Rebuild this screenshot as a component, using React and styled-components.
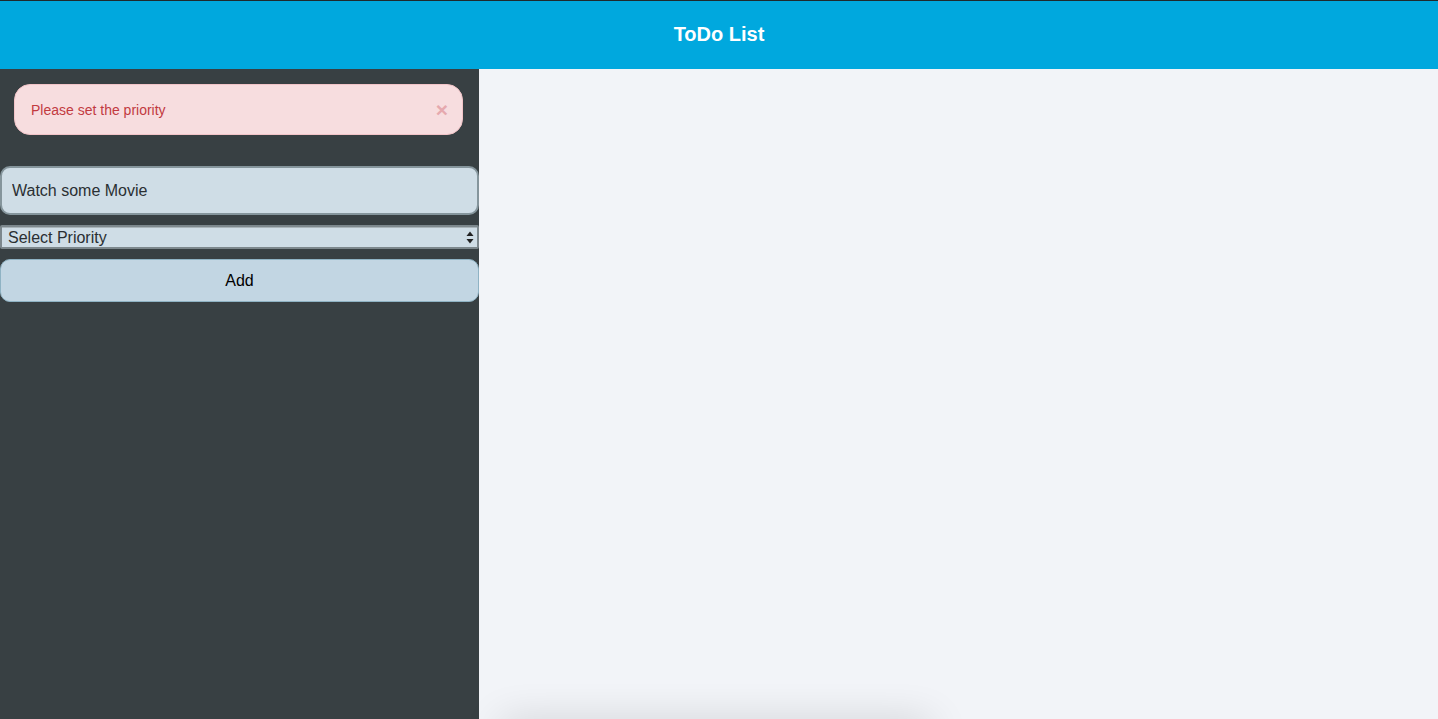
import React, { useState } from 'react'
import styled, { createGlobalStyle } from 'styled-components';

const GlobalStyle = createGlobalStyle`
    *{
        box-sizing: border-box;
    }
    body{
        margin: 0;
        overflow: hidden;
        font-family: "Liberation Sans", Arial, sans-serif;
        background: #f2f4f8;
    }
`;

function App() {
    const [task, setTask] = useState('Watch some Movie');
    const [alertOpen, setAlertOpen] = useState(true);

    return (
        <>
            <GlobalStyle />
            <Header>
                <h1>ToDo List</h1>
            </Header>
            <Body>
                <Sidebar>
                    {alertOpen && (
                        <Alert>
                            <span>Please set the priority</span>
                            <CloseButton onClick={() => setAlertOpen(false)}>&times;</CloseButton>
                        </Alert>
                    )}
                    <Form onSubmit={(e) => e.preventDefault()}>
                        <TaskInput value={task} onChange={(e) => setTask(e.target.value)} />
                        <SelectWrap>
                            <PrioritySelect defaultValue="">
                                <option value="">Select Priority</option>
                                <option value="high">High</option>
                                <option value="medium">Medium</option>
                                <option value="low">Low</option>
                            </PrioritySelect>
                            <SelectArrows width="8" height="13" viewBox="0 0 8 13">
                                <path d="M4 0.5 L7.5 5 L0.5 5 Z" fill="#222" />
                                <path d="M4 12.5 L7.5 8 L0.5 8 Z" fill="#222" />
                            </SelectArrows>
                        </SelectWrap>
                        <AddButton type="submit">Add</AddButton>
                    </Form>
                </Sidebar>
                <Main>
                    <ListCard />
                </Main>
            </Body>
        </>
    )
}

const Header = styled.header`
    height: 69px;
    background: #00a8de;
    border-top: 1px solid #1f2a2e;
    display: flex;
    align-items: center;
    justify-content: center;
    padding-bottom: 2px;
    h1{
        margin: 0;
        color: #fff;
        font-size: 20px;
        font-weight: bold;
    }
`;

const Body = styled.div`
    display: flex;
    height: calc(100vh - 69px);
`;

const Sidebar = styled.aside`
    width: 479px;
    flex-shrink: 0;
    background: #384043;
    padding-top: 15px;
`;

const Alert = styled.div`
    margin: 0 16px 0 14px;
    height: 51px;
    display: flex;
    align-items: center;
    justify-content: space-between;
    padding: 0 14px 0 16px;
    background: #f7dddf;
    border: 1px solid #f2c4c8;
    border-radius: 16px;
    color: #c23a3f;
    font-size: 14px;
`;

const CloseButton = styled.button`
    border: none;
    background: none;
    padding: 0;
    color: #e6a9ae;
    font-size: 21px;
    font-weight: bold;
    line-height: 1;
    cursor: pointer;
    font-family: "Liberation Sans", Arial, sans-serif;
`;

const Form = styled.form`
    display: flex;
    flex-direction: column;
    margin-top: 31px;
`;

const TaskInput = styled.input`
    width: 479px;
    height: 49px;
    padding: 0 10px;
    background: #cfdde6;
    border: 2px solid #85959c;
    border-radius: 10px;
    font-family: "Liberation Sans", Arial, sans-serif;
    font-size: 16px;
    color: #2a2f32;
    outline: none;
`;

const SelectWrap = styled.div`
    position: relative;
    margin-top: 10px;
`;

const PrioritySelect = styled.select`
    appearance: none;
    width: 479px;
    height: 24px;
    padding: 0 6px;
    background: #cfdde6;
    border: 2px solid #7d888d;
    border-radius: 2px;
    box-shadow: inset 0 1px 0 #a9b4b9;
    font-family: "Liberation Sans", Arial, sans-serif;
    font-size: 16px;
    color: #2a2f32;
    outline: none;
`;

const SelectArrows = styled.svg`
    position: absolute;
    right: 5px;
    top: 6px;
    pointer-events: none;
`;

const AddButton = styled.button`
    margin-top: 10px;
    width: 479px;
    height: 43px;
    background: #c2d6e3;
    border: 1px solid #8fb3c4;
    border-radius: 10px;
    font-family: "Liberation Sans", Arial, sans-serif;
    font-size: 16px;
    color: #000;
    cursor: pointer;
`;

const Main = styled.main`
    flex: 1;
    display: flex;
    flex-direction: column;
    justify-content: flex-end;
    background: #f2f4f8;
    padding: 0 0 0 22px;
`;

const ListCard = styled.div`
    width: 430px;
    height: 20px;
    margin-bottom: -24px;
    background: #f2f4f8;
    box-shadow: 0 0 40px rgba(0, 0, 0, 0.2);
`;

export default App;
